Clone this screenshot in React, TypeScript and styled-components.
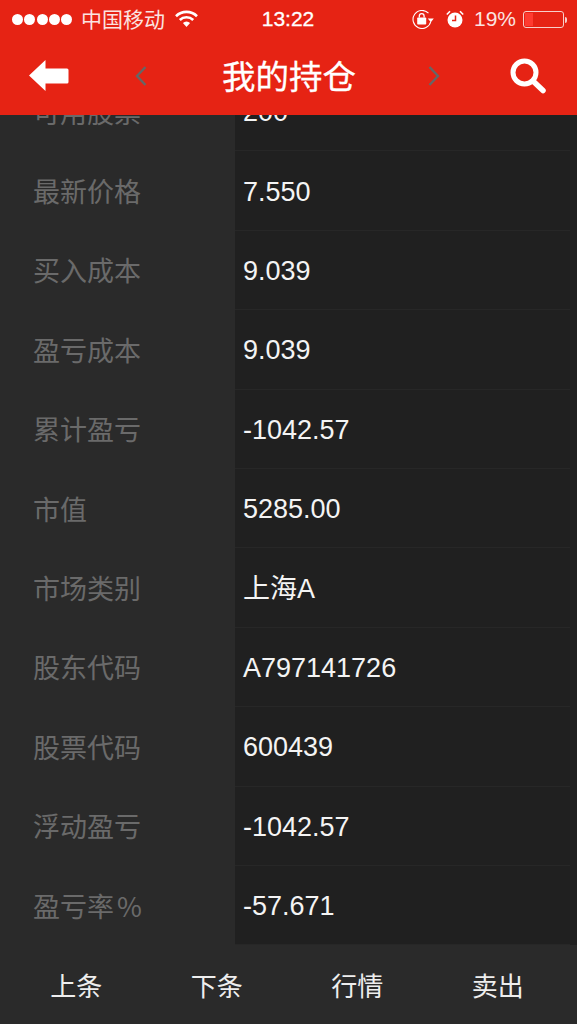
import React from 'react';
import styled, { createGlobalStyle } from 'styled-components';

const GlobalStyle = createGlobalStyle`
    html, body {
        margin: 0;
        padding: 0;
        background: #2a2a2a;
    }
    * {
        box-sizing: border-box;
    }
`

const Page = styled.div`
    width: 577px;
    height: 1024px;
    display: flex;
    flex-direction: column;
    overflow: hidden;
    font-family: "Liberation Sans", "Noto Sans CJK SC", sans-serif;
`

const Header = styled.header`
    height: 115px;
    flex: none;
    background: #e62314;
    color: #fff;
`

const StatusBar = styled.div`
    height: 38px;
    display: grid;
    grid-template-columns: 1fr auto 1fr;
    align-items: center;
    padding: 0 13px 0 12px;
    font-size: 21px;
`

const StatusLeft = styled.div`
    display: flex;
    align-items: center;
`

const Dots = styled.div`
    display: flex;
    gap: 1.25px;
    margin-right: 9px;
`

const Dot = styled.span`
    width: 11px;
    height: 11px;
    border-radius: 50%;
    background: #fff;
`

const Carrier = styled.span`
    margin: 0 10px 3px 0;
    color: #fbe4e1;
`

const WifiWrap = styled.span`
    display: flex;
    margin-bottom: 2px;
`

const Clock = styled.span`
    font-weight: 400;
    -webkit-text-stroke: 0.3px #fff;
`

const StatusRight = styled.div`
    display: flex;
    align-items: center;
    justify-content: flex-end;
`

const AlarmWrap = styled.span`
    display: flex;
    margin-left: 12px;
`

const Percent = styled.span`
    margin: 0 7px 0 10px;
    color: #fbe4e1;
`

const Battery = styled.div`
    position: relative;
    width: 41px;
    height: 17px;
    border: 1px solid #f7cfca;
    border-radius: 3px;
    padding: 1px;

    &::after {
        content: "";
        position: absolute;
        right: -4px;
        top: 5px;
        width: 2px;
        height: 6px;
        background: #f7cfca;
        border-radius: 0 2px 2px 0;
    }
`

const BatteryLevel = styled.div`
    width: 8px;
    height: 100%;
    background: #ff3b30;
`

const NavBar = styled.nav`
    height: 77px;
    display: grid;
    grid-template-columns: 40px 153px 134px 154px 36px;
    align-items: center;
    padding: 0 31px 4px 29px;
`

const NavIcon = styled.div<{ $inset?: number }>`
    display: flex;
    margin-top: 3px;
    padding-left: ${p => p.$inset || 0}px;
`

const Title = styled.h1`
    margin: 0;
    font-size: 33.5px;
    font-weight: 400;
    white-space: nowrap;
    color: #fff;
    -webkit-text-stroke: 0.3px #fff;
`

const Scroller = styled.main`
    height: 830px;
    flex: none;
    overflow: hidden;
    background: #202020;
`

const List = styled.div`
    margin-top: -43px;
`

const Row = styled.div`
    height: 79.4px;
    display: grid;
    grid-template-columns: 235px 1fr;
`

const Label = styled.div`
    display: flex;
    align-items: center;
    padding: 0 0 1px 33px;
    background: #2a2a2a;
    color: #6a6a6a;
    font-family: "Noto Sans CJK SC", sans-serif;
    font-size: 27px;
`

const PercentSign = styled.span`
    margin-left: 3px;
`

const Value = styled.div<{ $cjk?: boolean }>`
    display: flex;
    align-items: center;
    padding: ${p => (p.$cjk ? '0 0 3px 8px' : '3px 0 0 8px')};
    margin-right: 7px;
    color: #f4f4f4;
    font-size: 27px;
    border-bottom: 1px solid #272727;
`

const Footer = styled.footer`
    flex: 1;
    display: grid;
    grid-template-columns: repeat(4, 1fr);
    padding: 0 9px 0 6px;
    background: #2a2a2a;
`

const FooterButton = styled.button`
    border: 0;
    padding: 0;
    background: transparent;
    color: #eee;
    font-family: inherit;
    font-size: 26px;
`

const rows: [string, string][] = [
    ['可用股票', '200'],
    ['最新价格', '7.550'],
    ['买入成本', '9.039'],
    ['盈亏成本', '9.039'],
    ['累计盈亏', '-1042.57'],
    ['市值', '5285.00'],
    ['市场类别', '上海A'],
    ['股东代码', 'A797141726'],
    ['股票代码', '600439'],
    ['浮动盈亏', '-1042.57'],
    ['盈亏率', '-57.671'],
]

const actions = ['上条', '下条', '行情', '卖出']

const WifiIcon = () => (
    <svg width="23" height="17" viewBox="0 0 23 17" fill="none" stroke="#fff" strokeWidth="2.6">
        <path d="M1 6.2a15 15 0 0 1 21 0" />
        <path d="M4.800 10a9.600 9.600 0 0 1 13.400 0" />
        <path d="M11.500 17l-3.600-4a5 5 0 0 1 7.200 0z" fill="#fff" stroke="none" />
    </svg>
)

const RotationLockIcon = () => (
    <svg width="22" height="19" viewBox="0 0 22 19" fill="none">
        <path d="M18.800 11.500A9 9 0 1 1 16.500 3.200" stroke="#fff" strokeWidth="1.1" />
        <path d="M15.800 8.500h6l-3 3.800z" fill="#fff" />
        <rect x="5.200" y="7.500" width="9" height="7" rx="0.8" fill="#fff" />
        <path d="M7.300 7.500V6a2.400 2.400 0 0 1 4.800 0v1.500" stroke="#fff" strokeWidth="1.300" />
    </svg>
)

const AlarmIcon = () => (
    <svg width="18" height="18" viewBox="0 0 18 18" fill="none">
        <circle cx="9" cy="10" r="7.500" fill="#fff" />
        <path d="M9.500 5.500v5H6" stroke="#e62314" strokeWidth="1.500" />
        <path d="M0.800 4.500L4 1.200M17.200 4.500L14 1.200" stroke="#fff" strokeWidth="1.600" />
    </svg>
)

const BackIcon = () => (
    <svg width="40" height="32" viewBox="0 0 40 32">
        <path d="M0 15.500L16.500 0v8.500h21.500a1.500 1.500 0 0 1 1.500 1.500v12a1.500 1.500 0 0 1-1.500 1.500H16.500V31z" fill="#fff" />
    </svg>
)

const FlippedSvg = styled.svg<{ $flip?: boolean }>`
    transform: ${p => (p.$flip ? 'scaleX(-1)' : 'none')};
`

const Chevron = ({ flip }: { flip?: boolean }) => (
    <FlippedSvg $flip={flip} width="12" height="20" viewBox="0 0 12 20" fill="none" stroke="#666" strokeWidth="2.400">
        <path d="M10.500 1L2 10l8.500 9" />
    </FlippedSvg>
)

const SearchIcon = () => (
    <svg width="36" height="36" viewBox="0 0 36 36" fill="none" stroke="#fff">
        <circle cx="14.500" cy="14.500" r="11.500" strokeWidth="5" />
        <path d="M23.500 23.500L33 32.500" strokeWidth="5.500" strokeLinecap="round" />
    </svg>
)

const App = () => {
    return (
        <Page>
            <GlobalStyle />
            <Header>
                <StatusBar>
                    <StatusLeft>
                        <Dots>
                            {[0, 1, 2, 3, 4].map(i => <Dot key={i} />)}
                        </Dots>
                        <Carrier>中国移动</Carrier>
                        <WifiWrap><WifiIcon /></WifiWrap>
                    </StatusLeft>
                    <Clock>13:22</Clock>
                    <StatusRight>
                        <RotationLockIcon />
                        <AlarmWrap><AlarmIcon /></AlarmWrap>
                        <Percent>19%</Percent>
                        <Battery>
                            <BatteryLevel />
                        </Battery>
                    </StatusRight>
                </StatusBar>
                <NavBar>
                    <NavIcon><BackIcon /></NavIcon>
                    <NavIcon $inset={66}><Chevron /></NavIcon>
                    <Title>我的持仓</Title>
                    <NavIcon $inset={72}><Chevron flip /></NavIcon>
                    <NavIcon><SearchIcon /></NavIcon>
                </NavBar>
            </Header>
            <Scroller>
                <List>
                    {rows.map(([label, value]) => (
                        <Row key={label}>
                            <Label>
                                {label}
                                {label === '盈亏率' && <PercentSign>%</PercentSign>}
                            </Label>
                            <Value $cjk={value === '上海A'}>{value}</Value>
                        </Row>
                    ))}
                </List>
            </Scroller>
            <Footer>
                {actions.map(a => <FooterButton key={a}>{a}</FooterButton>)}
            </Footer>
        </Page>
    )
}

export default App;
